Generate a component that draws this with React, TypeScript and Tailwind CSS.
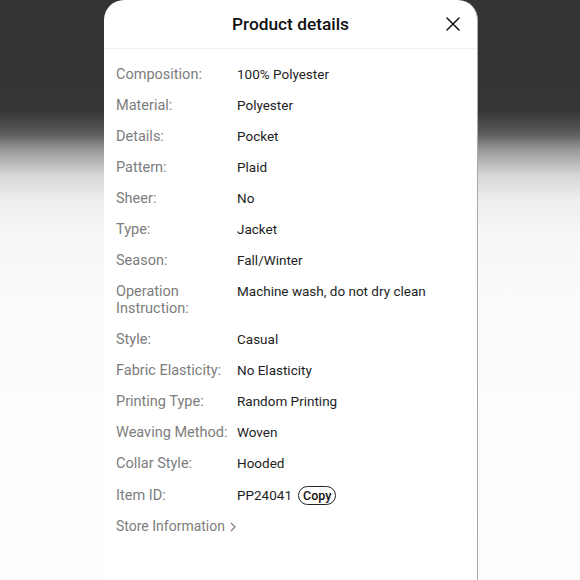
const rows: [string, string][] = [
  ["Composition:", "100% Polyester"],
  ["Material:", "Polyester"],
  ["Details:", "Pocket"],
  ["Pattern:", "Plaid"],
  ["Sheer:", "No"],
  ["Type:", "Jacket"],
  ["Season:", "Fall/Winter"],
  ["Operation Instruction:", "Machine wash, do not dry clean"],
  ["Style:", "Casual"],
  ["Fabric Elasticity:", "No Elasticity"],
  ["Printing Type:", "Random Printing"],
  ["Weaving Method:", "Woven"],
  ["Collar Style:", "Hooded"],
]

export default function App() {
  return (
    <div
      className="w-[580px] h-[580px] overflow-hidden bg-[linear-gradient(to_bottom,#333333_0px,#353535_110px,#5a5a5a_133px,#999999_150px,#d6d6d6_175px,#ededed_200px,#f6f6f6_230px,#fcfcfc_320px,#fdfdfd_580px)]"
      style={{ fontFamily: "Roboto, 'Liberation Sans', sans-serif" }}
    >
      <div className="ml-[104px] w-[374px] h-[580px] bg-white rounded-t-[20px] border-r border-[#a8a8a8] flex flex-col">
        <div className="relative h-[49px] pt-[2px] flex items-center justify-center border-b border-[#f1f1f1]">
          <h1 className="text-[17.3px] font-medium text-[#111]">Product details</h1>
          <button className="absolute right-[17px] top-[17px] w-[14px] h-[14px]">
            <svg viewBox="0 0 14 14" width="14" height="14" fill="none" stroke="#111" strokeWidth="1.5" strokeLinecap="round">
              <path d="M1 1L13 13M13 1L1 13" />
            </svg>
          </button>
        </div>
        <div className="pl-[12px] pr-4 pt-[17px] flex flex-col gap-[14px] text-[13.5px] leading-[17px]">
          {rows.map(([label, value]) => (
            <div key={label} className="flex items-baseline">
              <div className="w-[121px] shrink-0 text-[#7d7d7d] text-[14.5px] pr-2">{label}</div>
              <div className="text-[#1e1e1e]">{value}</div>
            </div>
          ))}
          <div className="flex items-center h-[17px] mt-px">
            <div className="w-[121px] shrink-0 text-[#7d7d7d] text-[14.5px]">Item ID:</div>
            <div className="text-[#1e1e1e]">PP24041</div>
            <button className="ml-[6px] h-[19px] px-[4px] rounded-full border border-[#222] text-[12.5px] font-medium text-[#111] leading-[17px]">
              Copy
            </button>
          </div>
          <div className="flex items-center text-[#7d7d7d] text-[14px]">
            <span>Store Information</span>
            <svg className="ml-[5px]" viewBox="0 0 6 10" width="6" height="10" fill="none" stroke="#7d7d7d" strokeWidth="1.2">
              <path d="M1 1l4 4-4 4" />
            </svg>
          </div>
        </div>
      </div>
    </div>
  )
}
